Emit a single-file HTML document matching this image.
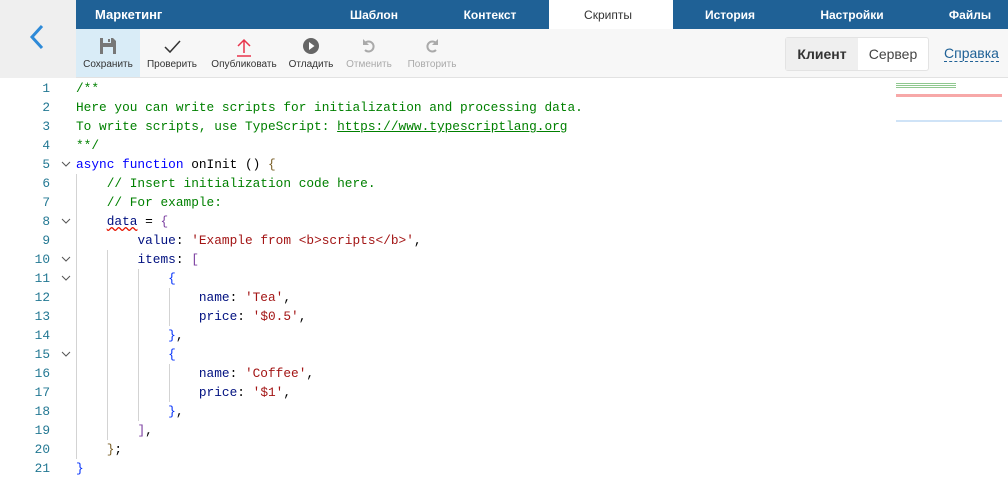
<!DOCTYPE html>
<html><head><meta charset="utf-8"><style>
*{margin:0;padding:0;box-sizing:border-box}
body{width:1008px;height:479px;overflow:hidden;background:#fff;font-family:"Liberation Sans",sans-serif;position:relative}
.left{position:absolute;left:0;top:0;width:76px;height:78px;background:#efefef}
.top{position:absolute;left:76px;top:0;width:932px;height:29px;background:#1f6196;color:#fff;font-size:12px;font-weight:bold}
.top span{position:absolute;top:8px;transform:translateX(-50%)}
.tab{position:absolute;left:473px;top:0;width:124px;height:29px;background:#fff}
.tb{position:absolute;left:76px;top:29px;width:932px;height:49px;background:#f7f7f7;border-bottom:1px solid #e2e2e2}
.btn{position:absolute;top:0;height:48px;font-size:10px;color:#333;text-align:center}
.btn .l{position:absolute;top:30px;left:0;right:0}
.btn svg{position:absolute;top:8px;left:50%;transform:translateX(-50%)}
.seg{position:absolute;left:785px;top:37px;width:144px;height:34px;border:1px solid #e3e3e3;border-radius:3px;background:#fff;font-size:14px}
.seg div{position:absolute;top:0;height:32px;line-height:32px;text-align:center}
.code{position:absolute;left:0;top:79px;font-family:"Liberation Mono",monospace;font-size:12.8px}
.ln{position:absolute;left:0;width:50px;text-align:right;color:#237893;height:19px;line-height:19px}
.cl{position:absolute;left:76px;white-space:pre;height:19px;line-height:19px;color:#000}
.f{position:absolute;left:61px;width:10px;height:19px}
.g{position:absolute;width:1px;background:#d3d3d3}
.c{color:#008000}.k{color:#0000ff}.p{color:#001080}.s{color:#a31515}.fn{color:#000}
.b1{color:#0431fa}.b2{color:#795e26}.b3{color:#7b3fa0}
</style></head><body>
<div class="left"><svg width="20" height="30" style="position:absolute;left:28px;top:24px"><path d="M14 2 L4 13 L14 24" fill="none" stroke="#2e8ad8" stroke-width="3"/></svg></div>
<div class="top">
<div class="tab"></div>
<span style="left:19px;transform:none;font-size:13px;top:7px">Маркетинг</span>
<span style="left:298px">Шаблон</span>
<span style="left:414px">Контекст</span>
<span style="left:532px;color:#333;font-weight:normal">Скрипты</span>
<span style="left:654px">История</span>
<span style="left:776px">Настройки</span>
<span style="left:894px">Файлы</span>
</div>
<div class="tb">
<div class="btn" style="left:0;width:64px;background:#d9ecf7"><svg width="18" height="18" viewBox="0 0 18 18"><path d="M1 1h13l3 3v13H1z" fill="#777"/><rect x="4" y="1" width="8" height="5" fill="#d9ecf7"/><rect x="9" y="2" width="2" height="3" fill="#777"/><rect x="4" y="10" width="10" height="7" fill="#d9ecf7"/></svg><div class="l">Сохранить</div></div>
<div class="btn" style="left:66px;width:60px"><svg width="18" height="18"><path d="M2 10 L7 15 L17 4" fill="none" stroke="#333" stroke-width="1.5"/></svg><div class="l">Проверить</div></div>
<div class="btn" style="left:132px;width:72px"><svg width="18" height="20"><path d="M9 16V3 M3 9 L9 3 L15 9 M2 19h14" fill="none" stroke="#e8344b" stroke-width="1.5"/></svg><div class="l">Опубликовать</div></div>
<div class="btn" style="left:210px;width:50px"><svg width="18" height="18"><circle cx="9" cy="9" r="8" fill="#666"/><path d="M7 5 L12.5 9 L7 13z" fill="#fff"/></svg><div class="l">Отладить</div></div>
<div class="btn" style="left:268px;width:50px;color:#aaa"><svg width="18" height="18"><path d="M5 6 A5 5 0 1 1 5 13" fill="none" stroke="#aaa" stroke-width="2"/><path d="M3 2v6h6" fill="#aaa"/></svg><div class="l">Отменить</div></div>
<div class="btn" style="left:328px;width:56px;color:#aaa"><svg width="18" height="18"><path d="M13 6 A5 5 0 1 0 13 13" fill="none" stroke="#aaa" stroke-width="2"/><path d="M15 2v6H9" fill="#aaa"/></svg><div class="l">Повторить</div></div>
</div>
<div class="seg"><div style="left:0;width:72px;background:#efefef;font-weight:bold;color:#333">Клиент</div><div style="left:72px;width:70px;color:#444">Сервер</div></div>
<div style="position:absolute;left:944px;top:45px;font-size:14px;color:#1f6196;border-bottom:1px dashed #1f6196;line-height:16px">Справка</div>
<div style="position:absolute;left:896px;top:80px;width:106px;height:44px;font-size:0">
<div style="position:absolute;left:0;top:14px;width:106px;height:3px;background:#f7a8a8"></div>
<div style="position:absolute;left:0;top:40px;width:106px;height:2px;background:#cfe3f7"></div>
<div style="position:absolute;left:0;top:3px;width:60px;height:6px;background:repeating-linear-gradient(#8fc88f 0 1px,transparent 1px 2px)"></div>
</div>
<div class="code">
<div class="g" style="left:76px;top:95px;height:285px"></div>
<div class="g" style="left:107px;top:171px;height:190px"></div>
<div class="g" style="left:138px;top:190px;height:152px"></div>
<div class="g" style="left:169px;top:209px;height:38px"></div>
<div class="g" style="left:169px;top:285px;height:38px"></div>
</div>
<div class="code" id="c"></div>
<script>
var L=[
'<span class="c">/**</span>',
'<span class="c">Here you can write scripts for initialization and processing data.</span>',
'<span class="c">To write scripts, use TypeScript: <u>https://www.typescriptlang.org</u></span>',
'<span class="c">**/</span>',
'<span class="k">async function</span> <span class="fn">onInit</span> () <span class="b2">{</span>',
'    <span class="c">// Insert initialization code here.</span>',
'    <span class="c">// For example:</span>',
'    <span class="p" style="text-decoration:underline wavy #e51400">data</span> = <span class="b3">{</span>',
'        <span class="p">value</span>: <span class="s">\'Example from &lt;b&gt;scripts&lt;/b&gt;\'</span>,',
'        <span class="p">items</span>: <span class="b3">[</span>',
'            <span class="b1">{</span>',
'                <span class="p">name</span>: <span class="s">\'Tea\'</span>,',
'                <span class="p">price</span>: <span class="s">\'$0.5\'</span>,',
'            <span class="b1">}</span>,',
'            <span class="b1">{</span>',
'                <span class="p">name</span>: <span class="s">\'Coffee\'</span>,',
'                <span class="p">price</span>: <span class="s">\'$1\'</span>,',
'            <span class="b1">}</span>,',
'        <span class="b3">]</span>,',
'    <span class="b2">}</span>;',
'<span class="b1">}</span>'];
var fold=[5,8,10,11,15],h='';
L.forEach(function(t,i){var y=i*19;h+='<div class="ln" style="top:'+y+'px">'+(i+1)+'</div><div class="cl" style="top:'+y+'px">'+t+'</div>';
if(fold.indexOf(i+1)>=0)h+='<svg class="f" style="top:'+y+'px" viewBox="0 0 10 19"><path d="M1 7 L5 11 L9 7" fill="none" stroke="#555" stroke-width="1"/></svg>';});
document.getElementById('c').innerHTML=h;
</script>
</body></html>
